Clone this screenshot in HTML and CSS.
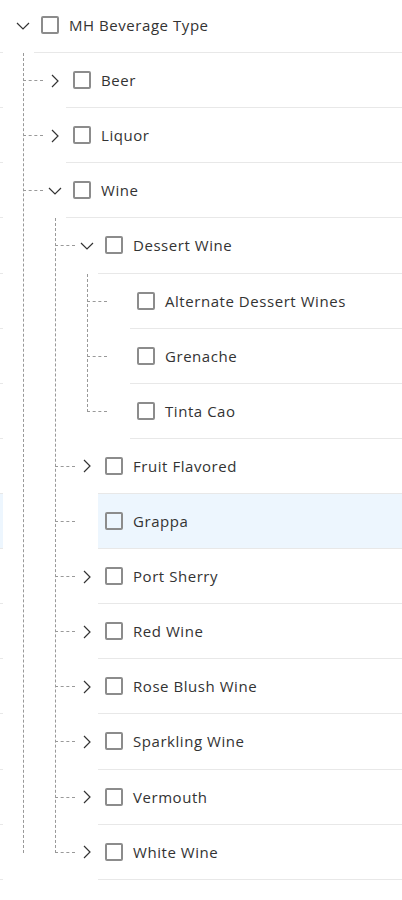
FILE: index.html
```html
<!DOCTYPE html>
<html lang="en">

<head>
  <title>Beverage Tree</title>
  <meta name="viewport" content="width=device-width, initial-scale=1">
  <link rel="stylesheet" href="styles.css">
</head>

<body>
  <div class="panel">

    <!-- edge of the neighbouring list -->
    <div class="sliver">
      <div class="cell"></div><div class="cell"></div><div class="cell"></div><div class="cell"></div>
      <div class="cell"></div><div class="cell"></div><div class="cell"></div><div class="cell"></div>
      <div class="cell"></div><div class="cell hover"></div><div class="cell"></div><div class="cell"></div>
      <div class="cell"></div><div class="cell"></div><div class="cell"></div><div class="cell"></div>
    </div>

    <ul class="tree">
      <li class="node">
        <div class="row">
          <span class="toggle"><svg width="14" height="8" viewBox="0 0 14 8"><polyline points="1,1 7,7 13,1" /></svg></span>
          <div class="item"><span class="box"></span><span class="label">MH Beverage Type</span></div>
        </div>
        <ul class="children">
          <li class="node">
            <div class="row">
              <span class="toggle"><svg width="8" height="14" viewBox="0 0 8 14"><polyline points="1,1 7,7 1,13" /></svg></span>
              <div class="item"><span class="box"></span><span class="label">Beer</span></div>
            </div>
          </li>
          <li class="node">
            <div class="row">
              <span class="toggle"><svg width="8" height="14" viewBox="0 0 8 14"><polyline points="1,1 7,7 1,13" /></svg></span>
              <div class="item"><span class="box"></span><span class="label">Liquor</span></div>
            </div>
          </li>
          <li class="node">
            <div class="row">
              <span class="toggle"><svg width="14" height="8" viewBox="0 0 14 8"><polyline points="1,1 7,7 13,1" /></svg></span>
              <div class="item"><span class="box"></span><span class="label">Wine</span></div>
            </div>
            <ul class="children">
              <li class="node">
                <div class="row">
                  <span class="toggle"><svg width="14" height="8" viewBox="0 0 14 8"><polyline points="1,1 7,7 13,1" /></svg></span>
                  <div class="item"><span class="box"></span><span class="label">Dessert Wine</span></div>
                </div>
                <ul class="children">
                  <li class="node">
                    <div class="row">
                      <span class="toggle"></span>
                      <div class="item"><span class="box"></span><span class="label">Alternate Dessert Wines</span></div>
                    </div>
                  </li>
                  <li class="node">
                    <div class="row">
                      <span class="toggle"></span>
                      <div class="item"><span class="box"></span><span class="label">Grenache</span></div>
                    </div>
                  </li>
                  <li class="node">
                    <div class="row">
                      <span class="toggle"></span>
                      <div class="item"><span class="box"></span><span class="label">Tinta Cao</span></div>
                    </div>
                  </li>
                </ul>
              </li>
              <li class="node">
                <div class="row">
                  <span class="toggle"><svg width="8" height="14" viewBox="0 0 8 14"><polyline points="1,1 7,7 1,13" /></svg></span>
                  <div class="item"><span class="box"></span><span class="label">Fruit Flavored</span></div>
                </div>
              </li>
              <li class="node">
                <div class="row">
                  <span class="toggle"></span>
                  <div class="item hover"><span class="box"></span><span class="label">Grappa</span></div>
                </div>
              </li>
              <li class="node">
                <div class="row">
                  <span class="toggle"><svg width="8" height="14" viewBox="0 0 8 14"><polyline points="1,1 7,7 1,13" /></svg></span>
                  <div class="item"><span class="box"></span><span class="label">Port Sherry</span></div>
                </div>
              </li>
              <li class="node">
                <div class="row">
                  <span class="toggle"><svg width="8" height="14" viewBox="0 0 8 14"><polyline points="1,1 7,7 1,13" /></svg></span>
                  <div class="item"><span class="box"></span><span class="label">Red Wine</span></div>
                </div>
              </li>
              <li class="node">
                <div class="row">
                  <span class="toggle"><svg width="8" height="14" viewBox="0 0 8 14"><polyline points="1,1 7,7 1,13" /></svg></span>
                  <div class="item"><span class="box"></span><span class="label">Rose Blush Wine</span></div>
                </div>
              </li>
              <li class="node">
                <div class="row">
                  <span class="toggle"><svg width="8" height="14" viewBox="0 0 8 14"><polyline points="1,1 7,7 1,13" /></svg></span>
                  <div class="item"><span class="box"></span><span class="label">Sparkling Wine</span></div>
                </div>
              </li>
              <li class="node">
                <div class="row">
                  <span class="toggle"><svg width="8" height="14" viewBox="0 0 8 14"><polyline points="1,1 7,7 1,13" /></svg></span>
                  <div class="item"><span class="box"></span><span class="label">Vermouth</span></div>
                </div>
              </li>
              <li class="node">
                <div class="row">
                  <span class="toggle"><svg width="8" height="14" viewBox="0 0 8 14"><polyline points="1,1 7,7 1,13" /></svg></span>
                  <div class="item"><span class="box"></span><span class="label">White Wine</span></div>
                </div>
              </li>
            </ul>
          </li>
        </ul>
      </li>
    </ul>

  </div>
</body>

</html>
```

FILE: styles.css
```css
* {
  box-sizing: border-box;
  margin: 0;
  padding: 0;
}

body {
  background: #fff;
  font-family: "Open Sans", Lato, sans-serif;
  color: #333;
}

.panel {
  display: flex;
  margin-top: -2px;
}

.sliver {
  width: 3px;
  flex-shrink: 0;
}

.cell {
  height: 55.12px;
  border-bottom: 1px solid #e8e8e8;
}

.cell.hover {
  background: #edf6fe;
}

ul {
  list-style: none;
}

.tree {
  flex: 1;
}

.node {
  position: relative;
}

.children {
  position: relative;
  padding-left: 32px;
}

/* vertical guide */
.children::before {
  content: "";
  position: absolute;
  left: 20px;
  top: 0;
  bottom: 27px;
  border-left: 1px dashed #999;
}

/* horizontal connector */
.children > .node::before {
  content: "";
  position: absolute;
  left: -12px;
  top: 27px;
  width: 20px;
  border-top: 1px dashed #999;
}

.row {
  display: flex;
  height: 55.12px;
}

.toggle {
  width: 16px;
  margin-left: 12px;
  margin-right: 3px;
  display: flex;
  align-items: center;
  justify-content: center;
  flex-shrink: 0;
}

.toggle svg {
  fill: none;
  stroke: #333;
  stroke-width: 1.2;
}

.item {
  flex: 1;
  display: flex;
  align-items: center;
  padding-left: 7px;
  border-bottom: 1px solid #e8e8e8;
}

.item.hover {
  background: #edf6fe;
}

.box {
  width: 18px;
  height: 18px;
  border: 2px solid #8c8c8c;
  border-radius: 2px;
  flex-shrink: 0;
}

.label {
  margin-left: 10px;
  font-size: 15px;
  letter-spacing: 0.55px;
}
```
